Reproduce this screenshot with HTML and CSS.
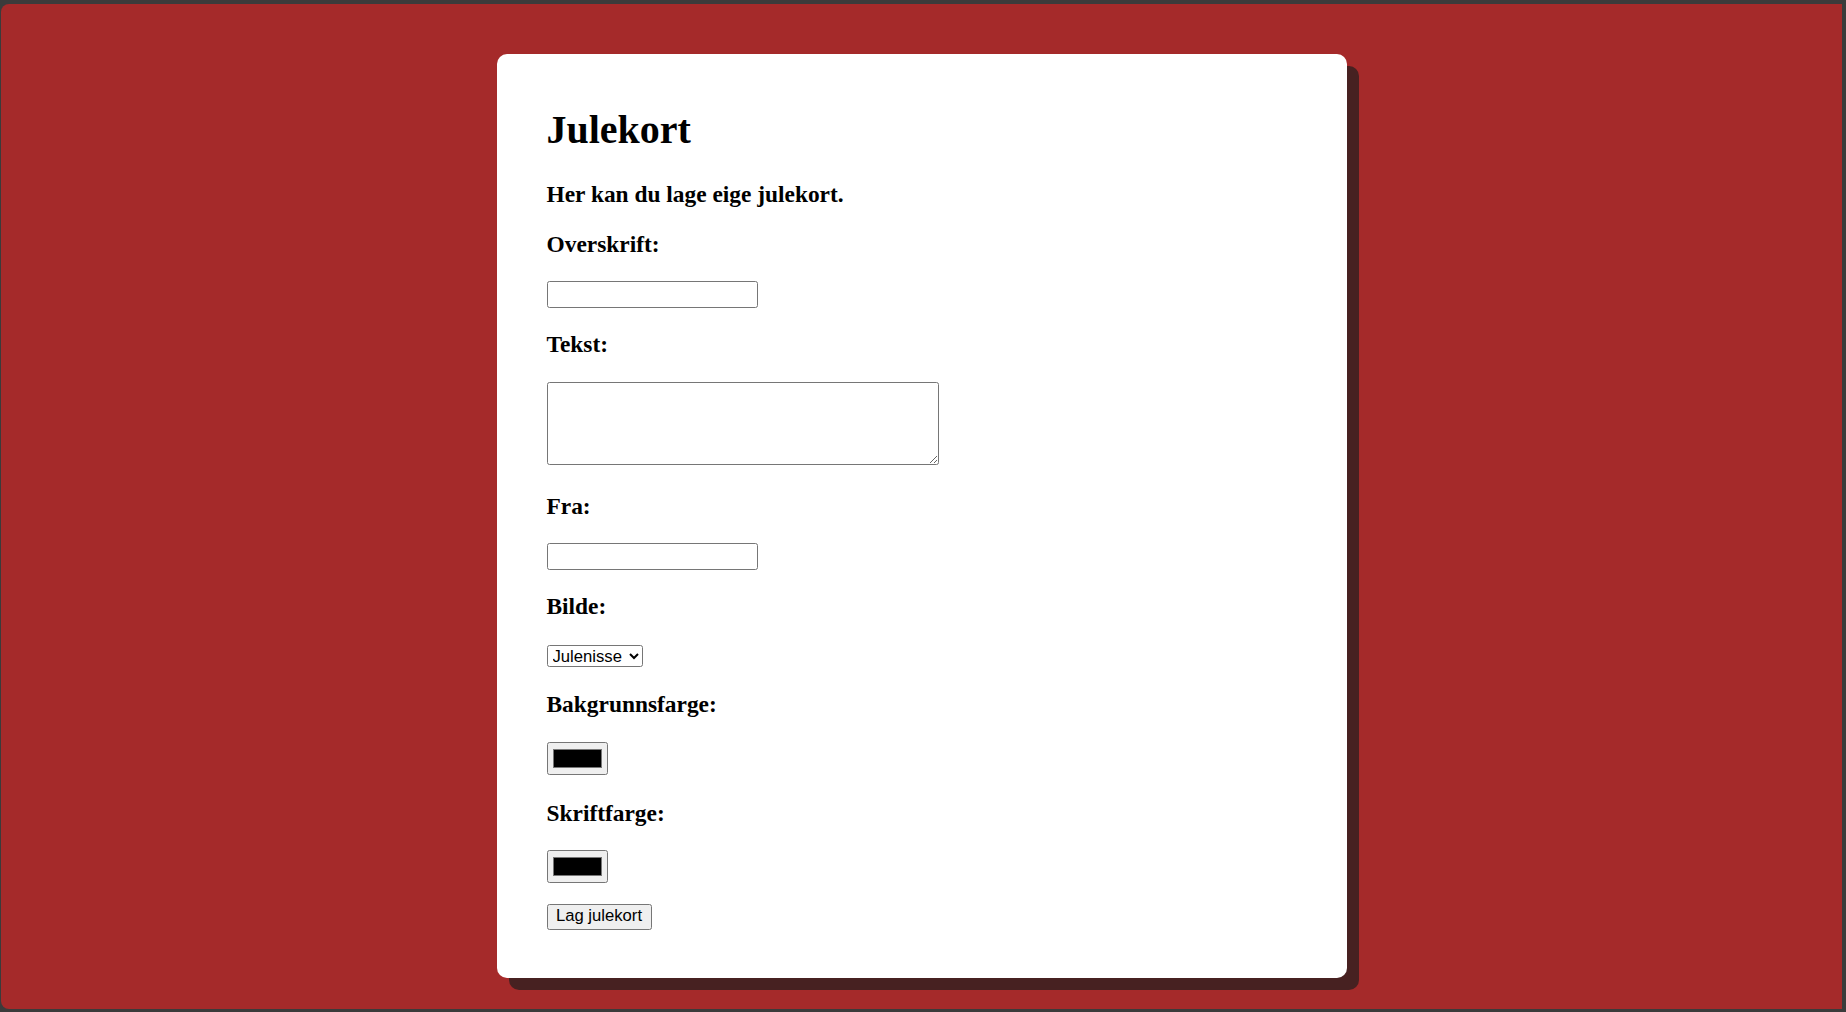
FILE: index.html
```html
<!DOCTYPE html>
<html lang="nn">
<head>
<meta charset="utf-8">
<title>Julekort</title>
<link rel="stylesheet" href="styles.css">
</head>
<body>
<div class="window">
  <main class="card">
    <h1 class="title">Julekort</h1>
    <p class="lead">Her kan du lage eige julekort.</p>
    <label class="label" for="overskrift">Overskrift:</label>
    <input class="text-input" id="overskrift" type="text">
    <label class="label" for="tekst">Tekst:</label>
    <textarea class="text-area" id="tekst"></textarea>
    <label class="label label-after-area" for="fra">Fra:</label>
    <input class="text-input" id="fra" type="text">
    <label class="label" for="bilde">Bilde:</label>
    <select class="select select-gap" id="bilde">
      <option>Julenisse</option>
    </select>
    <label class="label label-after-small" for="bakgrunn">Bakgrunnsfarge:</label>
    <input class="color-input color-gap" id="bakgrunn" type="color" value="#000000">
    <label class="label label-after-color" for="skrift">Skriftfarge:</label>
    <input class="color-input" id="skrift" type="color" value="#000000">
    <button class="button" type="button">Lag julekort</button>
  </main>
</div>
</body>
</html>
```
FILE: styles.css
```css
html, body {
  margin: 0;
  padding: 0;
  height: 100%;
}

body {
  background: #3b3b3b;
  padding: 4px 4px 3px 1px;
  box-sizing: border-box;
  font-family: "Liberation Serif", "Times New Roman", serif;
  color: #000;
}

.window {
  height: 100%;
  background: #a52a2a;
  border-radius: 8px 0 0 8px;
  padding-top: 50px;
  box-sizing: border-box;
  display: flex;
  justify-content: center;
  align-items: flex-start;
}

.card {
  width: 850px;
  height: 924px;
  box-sizing: border-box;
  background: #fff;
  border-radius: 10px;
  box-shadow: 12px 12px 0 #472121;
  padding: 53px 50px 0 50px;
  display: flex;
  flex-direction: column;
  align-items: flex-start;
}

.title {
  margin: 0;
  font-size: 40px;
  line-height: 46px;
  font-weight: bold;
}

.lead {
  margin: 28px 0 0 0;
  font-size: 23.4px;
  line-height: 27px;
  font-weight: bold;
}

.label {
  display: block;
  margin-top: 23px;
  font-size: 23.4px;
  line-height: 27px;
  font-weight: bold;
}

.label-after-area {
  margin-top: 28px;
}

.label-after-small {
  margin-top: 24px;
}

.label-after-color {
  margin-top: 25px;
}

.text-input {
  margin: 23px 0 0 0;
  width: 211px;
  height: 27px;
  box-sizing: border-box;
  border: 1px solid #767676;
  border-radius: 2.5px;
  background: #fff;
  padding: 1px 2.5px;
  font-family: "Liberation Sans", Arial, sans-serif;
  font-size: 16.67px;
}

.text-area {
  margin: 24px 0 0 0;
  width: 392px;
  height: 83px;
  box-sizing: border-box;
  border: 1px solid #767676;
  border-radius: 2.5px;
  background: #fff;
  padding: 2.5px;
  font-family: "Liberation Mono", monospace;
  font-size: 16.67px;
}

.select {
  margin: 0;
  width: 96px;
  height: 22px;
  box-sizing: border-box;
  border: 1px solid #767676;
  border-radius: 2.5px;
  background: #fff;
  color: #000;
  font-family: "Liberation Sans", Arial, sans-serif;
  font-size: 16.67px;
  padding: 0 0 0 1px;
}

.select-gap {
  margin-top: 25px;
}

.color-input {
  margin: 23px 0 0 0;
  width: 61px;
  height: 33px;
  box-sizing: border-box;
  border: 1px solid #767676;
  border-radius: 2.5px;
  background: #efefef;
  padding: 1.25px 2.5px;
  cursor: pointer;
}

.color-gap {
  margin-top: 24px;
}

.color-input::-webkit-color-swatch-wrapper {
  padding: 5px 2.5px;
}

.color-input::-webkit-color-swatch {
  border: 1px solid #777;
  border-radius: 0;
}

.button {
  margin: 21px 0 0 0;
  height: 25.5px;
  width: 105px;
  box-sizing: border-box;
  border: 1px solid #767676;
  border-radius: 2.5px;
  background: #efefef;
  color: #000;
  padding: 1.25px 7.5px;
  font-family: "Liberation Sans", Arial, sans-serif;
  font-size: 16.67px;
  line-height: 1;
}
```
